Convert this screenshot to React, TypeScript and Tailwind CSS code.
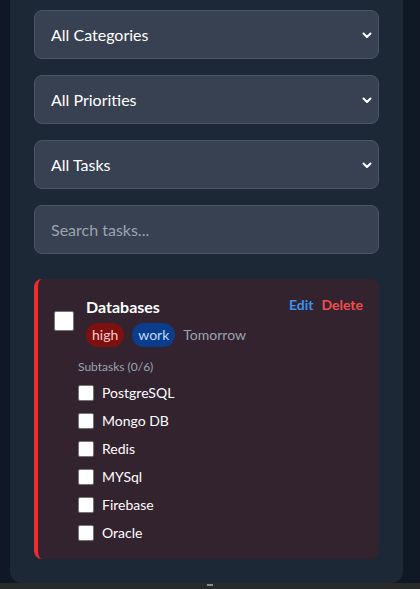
import React from 'react';

const subtasks = ['PostgreSQL', 'Mongo DB', 'Redis', 'MYSql', 'Firebase', 'Oracle'];

const selects = ['All Categories', 'All Priorities', 'All Tasks'];

function Chevron() {
  return (
    <svg width="12" height="12" viewBox="0 0 24 24" fill="none" stroke="white" strokeWidth="4" strokeLinecap="round" strokeLinejoin="round">
      <path d="M5 9l7 7 7-7" />
    </svg>
  );
}

export default function App() {
  return (
    <div className="h-[589px] w-[420px] overflow-hidden bg-[#101826] flex flex-col" style={{ fontFamily: '"Lato", "Noto Sans", sans-serif' }}>
      <div className="flex-1 pl-[10px]">
        <div className="w-[393px] h-full bg-[#1c2836] rounded-b-xl px-6 pt-[10px] flex flex-col gap-4">
          {selects.map((s) => (
            <div key={s} className="h-[49px] flex items-center justify-between rounded-lg border border-[#4b5563] bg-[#374151] pl-4 pr-[5px] text-white text-base">
              <span>{s}</span>
              <Chevron />
            </div>
          ))}
          <div className="h-[49px] flex items-center rounded-lg border border-[#4b5563] bg-[#374151] px-4 text-base text-[#9ca3af]">
            Search tasks...
          </div>

          <div className="mt-[9px] rounded-lg border-l-4 border-[#ef2b2b] bg-[#33232f] pl-4 pr-4 pt-4 pb-4">
            <div className="flex items-start justify-between">
              <div className="flex items-center gap-3">
                <div className="w-5 h-5 bg-white border border-[#767676] rounded-[2px]" />
                <div className="flex flex-col gap-1">
                  <div className="text-base font-bold text-white leading-6">Databases</div>
                  <div className="flex items-center gap-2 text-sm">
                    <span className="rounded-full bg-[#7f1010] text-[#fecaca] px-1.5 py-0.5">high</span>
                    <span className="rounded-full bg-[#0c3c8c] text-[#bfdbfe] px-1.5 py-0.5">work</span>
                    <span className="text-[#9ca3af]">Tomorrow</span>
                  </div>
                </div>
              </div>
              <div className="flex items-center gap-2 text-sm font-bold">
                <span className="text-[#3b91f0]">Edit</span>
                <span className="text-[#f24d4d]">Delete</span>
              </div>
            </div>
            <div className="ml-6 mt-3">
              <div className="text-xs text-[#9ca3af] leading-4">Subtasks (0/6)</div>
              <div className="mt-2 flex flex-col gap-2">
                {subtasks.map((t) => (
                  <div key={t} className="flex items-center gap-2 h-5">
                    <div className="w-4 h-4 bg-white border border-[#767676] rounded-[2px]" />
                    <span className="text-sm text-white">{t}</span>
                  </div>
                ))}
              </div>
            </div>
          </div>
        </div>
      </div>
      <div className="h-[6px] bg-[#2a2a2a] flex justify-center pt-[1px]">
        <div className="w-[6px] h-[2px] bg-[#8a8a8a]" />
      </div>
    </div>
  );
}
